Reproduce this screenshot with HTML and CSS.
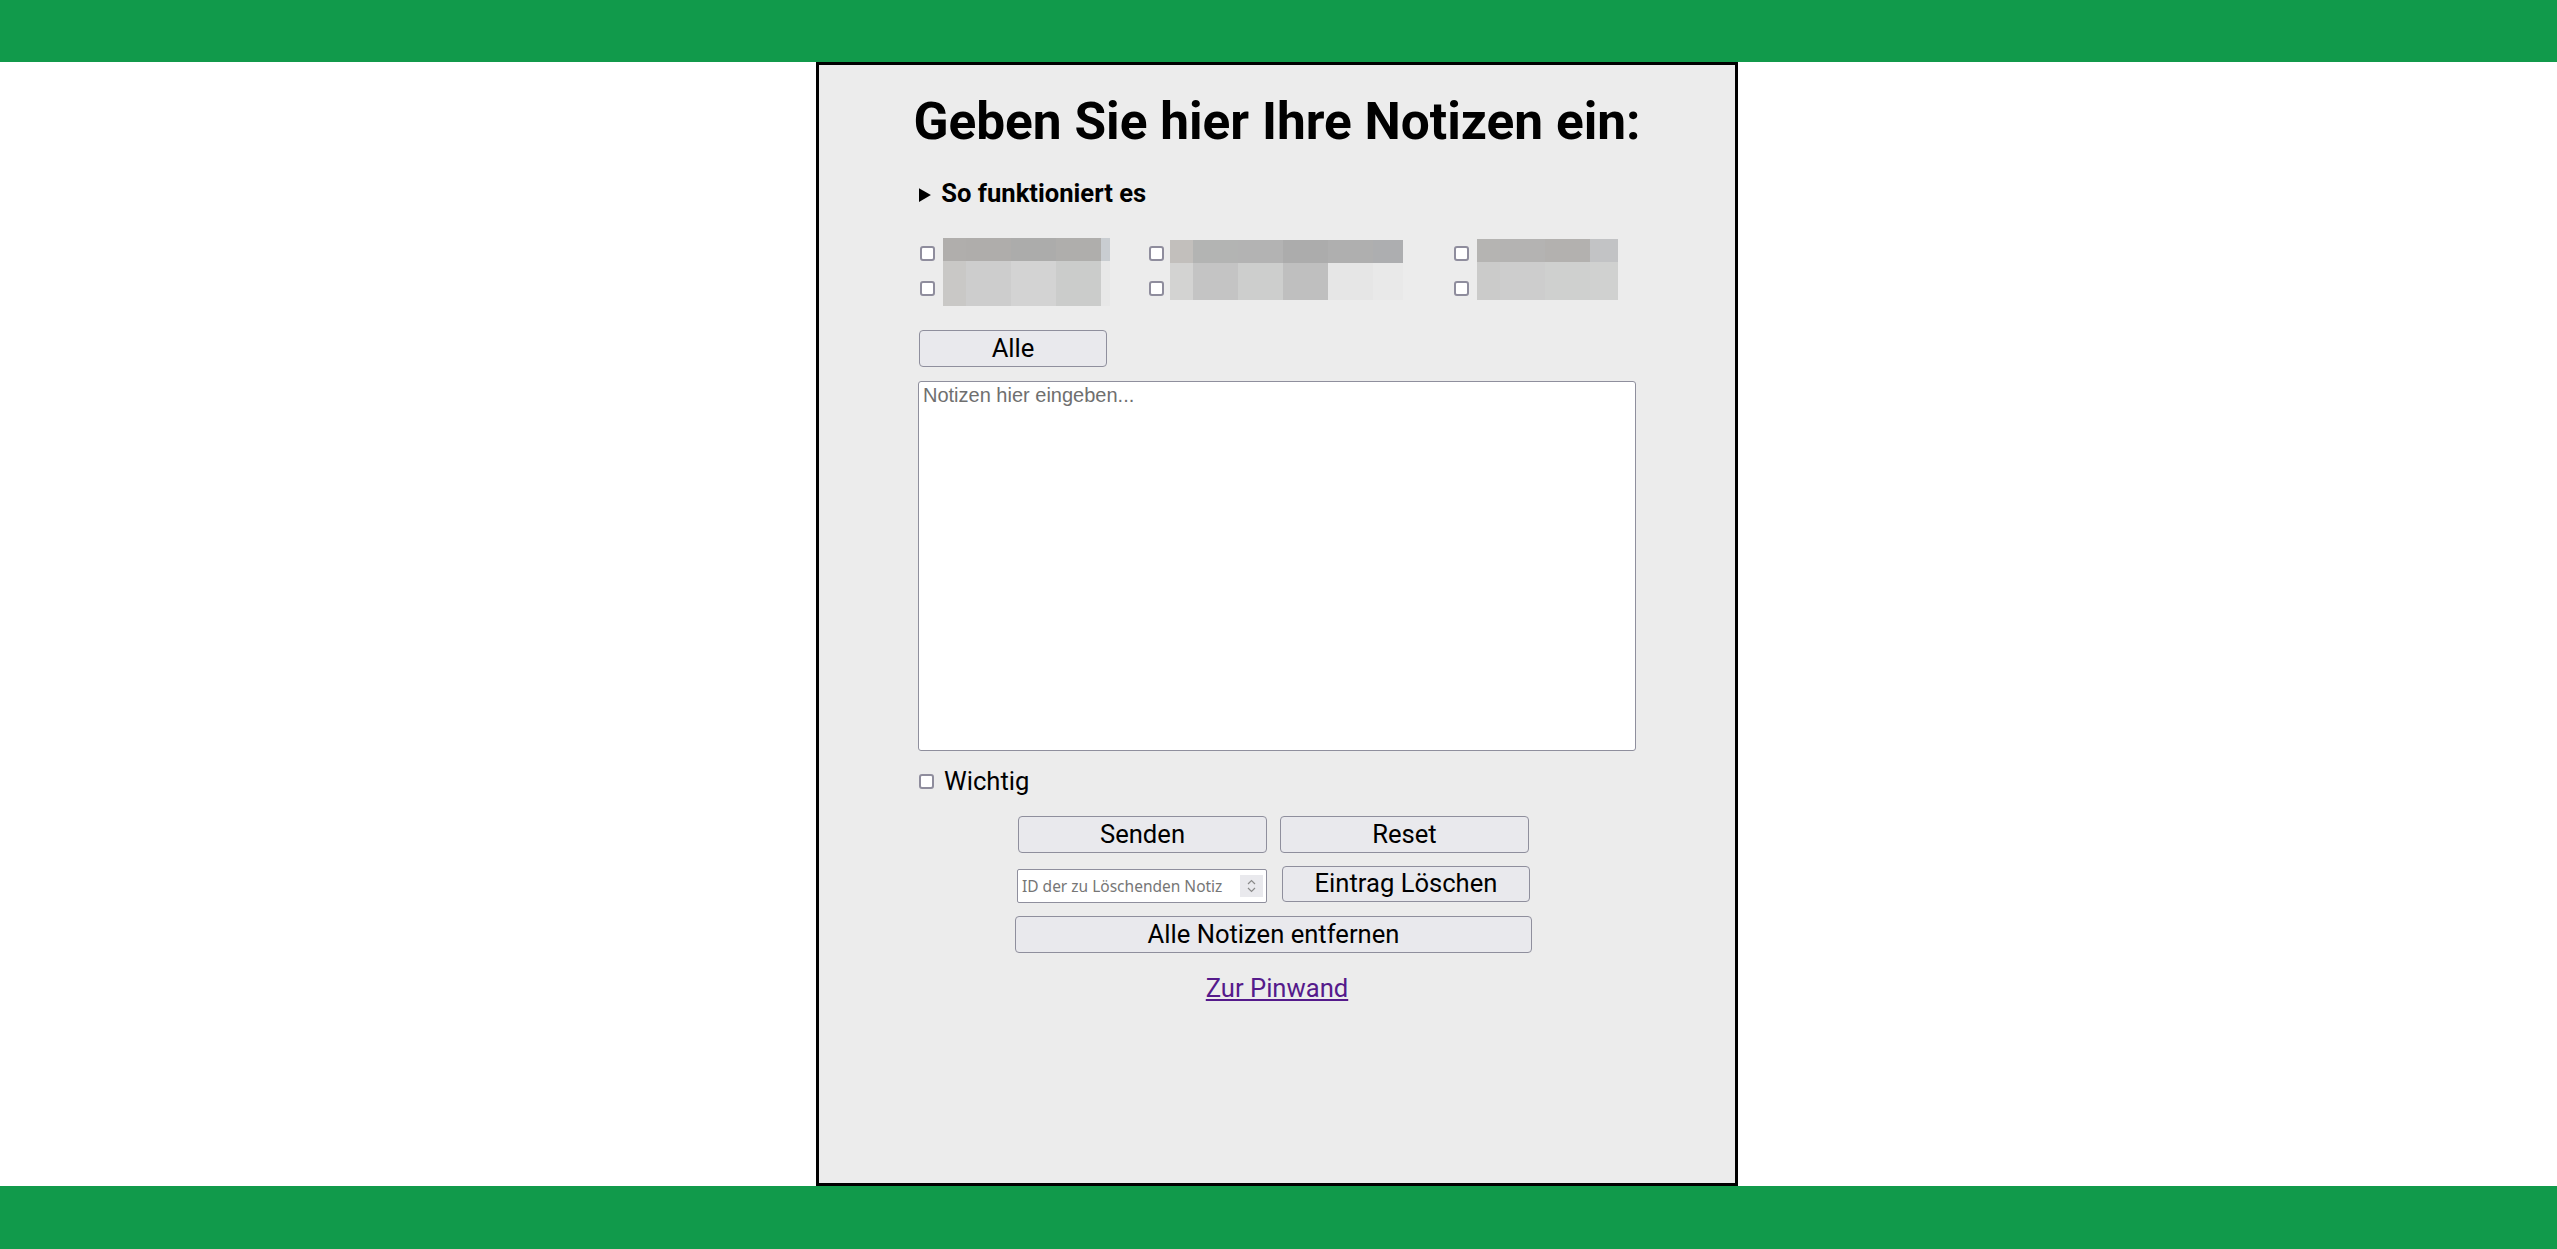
FILE: index.html
```html
<!DOCTYPE html>
<html lang="de">
<head>
<meta charset="utf-8">
<title>Notizen</title>
<link rel="stylesheet" href="styles.css">
</head>
<body>
<div class="page">
  <header class="topbar"></header>
  <main class="box">
    <div class="content">
      <h1 class="title">Geben Sie hier Ihre Notizen ein:</h1>
      <details class="howto">
        <summary>So funktioniert es</summary>
      </details>

      <div class="options">
        <div class="opt opt1">
          <div class="checks">
            <input type="checkbox" class="cb">
            <input type="checkbox" class="cb">
          </div>
          <div class="redact r1">
            <span></span><span></span><span></span><span></span><span></span>
            <span></span><span></span><span></span><span></span><span></span>
          </div>
        </div>
        <div class="opt opt2">
          <div class="checks">
            <input type="checkbox" class="cb">
            <input type="checkbox" class="cb">
          </div>
          <div class="redact r2">
            <span></span><span></span><span></span><span></span><span></span><span></span>
            <span></span><span></span><span></span><span></span><span></span><span></span>
          </div>
        </div>
        <div class="opt opt3">
          <div class="checks">
            <input type="checkbox" class="cb">
            <input type="checkbox" class="cb">
          </div>
          <div class="redact r3">
            <span></span><span></span><span></span><span></span>
            <span></span><span></span><span></span><span></span>
          </div>
        </div>
      </div>

      <button class="btn btn-all" type="button">Alle</button>

      <textarea class="notes" placeholder="Notizen hier eingeben..."></textarea>

      <label class="important">
        <input type="checkbox" class="cb">
        <span>Wichtig</span>
      </label>

      <div class="actions">
        <div class="row">
          <button class="btn btn-half" type="button">Senden</button>
          <button class="btn btn-half" type="button">Reset</button>
        </div>
        <div class="row row-del">
          <div class="numfield">
            <input class="numinput" type="text" placeholder="ID der zu Löschenden Notiz">
            <span class="spin">
              <svg width="11" height="16" viewBox="0 0 11 16" aria-hidden="true">
                <path d="M2 6 L5.5 2.5 L9 6" fill="none" stroke="#8a8a8a" stroke-width="1.2"/>
                <path d="M2 10 L5.5 13.5 L9 10" fill="none" stroke="#8a8a8a" stroke-width="1.2"/>
              </svg>
            </span>
          </div>
          <button class="btn btn-del" type="button">Eintrag Löschen</button>
        </div>
        <div class="row">
          <button class="btn btn-wide" type="button">Alle Notizen entfernen</button>
        </div>
      </div>

      <p class="linkline"><a class="pinlink" href="#pinwand">Zur Pinwand</a></p>
    </div>
  </main>
  <footer class="bottombar"></footer>
</div>
</body>
</html>
```
FILE: styles.css
```css
* { box-sizing: border-box; }

html, body {
  margin: 0;
  padding: 0;
  background: #ffffff;
  font-family: Roboto, "Liberation Sans", Arial, sans-serif;
  color: #000;
}

.page {
  display: flex;
  flex-direction: column;
  height: 100vh;
}

.topbar {
  height: 62px;
  background: #119a4b;
  flex: none;
}

.bottombar {
  height: 63px;
  background: #119a4b;
  flex: none;
}

.box {
  flex: 1;
  width: 922px;
  margin: 0 auto 0 calc(50% - 462.5px);
  border: 3px solid #000;
  background: #ececec;
}

.content {
  width: 718px;
  margin: 0 auto;
  padding-top: 27px;
}

.title {
  margin: 0 -40px;
  font-size: 51.4px;
  line-height: 60px;
  font-weight: 700;
  text-align: center;
  white-space: nowrap;
}

.howto {
  margin-top: 26px;
}

.howto summary {
  font-size: 25.6px;
  line-height: 30px;
  font-weight: 700;
  cursor: pointer;
  margin-left: 1px;
}

.howto summary::marker {
  font-size: 21px;
}

/* redacted options */
.options {
  display: flex;
  margin-top: 28px;
  height: 68px;
}

.opt {
  display: flex;
  align-items: flex-start;
}

.opt1 { width: 231px; padding-left: 2px; gap: 8px; }
.opt2 { width: 305px; gap: 6px; }
.opt3 { gap: 8px; }

.checks {
  display: flex;
  flex-direction: column;
  gap: 20px;
  padding-top: 8px;
}

.cb {
  appearance: none;
  -webkit-appearance: none;
  width: 15px;
  height: 15px;
  margin: 0;
  border: 2px solid #8f8d9d;
  border-radius: 3px;
  background: #fff;
  display: block;
}

.redact {
  display: grid;
}

.r1 {
  grid-template-columns: 23px 45px 45px 45px 9px;
  grid-template-rows: 23px 45px;
}
.r1 span:nth-child(1) { background: #b0aeac; }
.r1 span:nth-child(2) { background: #afadab; }
.r1 span:nth-child(3) { background: #acacab; }
.r1 span:nth-child(4) { background: #afaeac; }
.r1 span:nth-child(5) { background: #c9cdd1; }
.r1 span:nth-child(6) { background: #c9c8c6; }
.r1 span:nth-child(7) { background: #cdcdcd; }
.r1 span:nth-child(8) { background: #d3d3d3; }
.r1 span:nth-child(9) { background: #cbcccb; }
.r1 span:nth-child(10) { background: #e8e8e8; }

.r2 {
  margin-top: 2px;
  grid-template-columns: 23px 45px 45px 45px 45px 30px;
  grid-template-rows: 23px 37px;
}
.r2 span:nth-child(1) { background: #c2bfbc; }
.r2 span:nth-child(2) { background: #b3b4b3; }
.r2 span:nth-child(3) { background: #b3b3b3; }
.r2 span:nth-child(4) { background: #acacac; }
.r2 span:nth-child(5) { background: #afafaf; }
.r2 span:nth-child(6) { background: #adaeb0; }
.r2 span:nth-child(7) { background: #d3d3d2; }
.r2 span:nth-child(8) { background: #c4c4c4; }
.r2 span:nth-child(9) { background: #cdcecd; }
.r2 span:nth-child(10) { background: #bfbfbf; }
.r2 span:nth-child(11) { background: #e6e6e6; }
.r2 span:nth-child(12) { background: #e9e9e9; }

.r3 {
  margin-top: 1px;
  grid-template-columns: 23px 45px 45px 28px;
  grid-template-rows: 23px 38px;
}
.r3 span:nth-child(1) { background: #b5b4b2; }
.r3 span:nth-child(2) { background: #b4b3b2; }
.r3 span:nth-child(3) { background: #b3b1af; }
.r3 span:nth-child(4) { background: #c2c3c5; }
.r3 span:nth-child(5) { background: #cbcbca; }
.r3 span:nth-child(6) { background: #cdcdcd; }
.r3 span:nth-child(7) { background: #cfd0cf; }
.r3 span:nth-child(8) { background: #d0d1d0; }

/* buttons */
.btn {
  font-family: Roboto, "Liberation Sans", Arial, sans-serif;
  font-size: 25.6px;
  line-height: 1;
  color: #000;
  background: #e9e9ed;
  border: 1px solid #8f8f9d;
  border-radius: 4px;
  padding: 0;
  display: flex;
  align-items: center;
  justify-content: center;
}

.btn-all {
  margin-top: 24px;
  margin-left: 1px;
  width: 188px;
  height: 37px;
}

.notes {
  display: block;
  margin-top: 14px;
  width: 718px;
  height: 370px;
  border: 1px solid #8f8f9d;
  border-radius: 3px;
  padding: 2px 4px;
  background: #fff;
  resize: none;
  font-family: "Liberation Sans", Arial, sans-serif;
  font-size: 20px;
}

.notes::placeholder {
  color: #6f6f6f;
}

.important {
  display: flex;
  align-items: center;
  gap: 10px;
  margin-top: 15px;
  margin-left: 1px;
  height: 30px;
  font-size: 25.6px;
  line-height: 30px;
}

.actions {
  display: flex;
  flex-direction: column;
  align-items: center;
  margin-top: 20px;
  padding-right: 7px;
  margin-left: -60px;
  margin-right: -60px;
}

.row {
  display: flex;
  gap: 13px;
}

.row + .row { margin-top: 13px; }

.row-del {
  gap: 15px;
  align-items: flex-start;
}

.btn-half {
  width: 249px;
  height: 37px;
}

.btn-del {
  width: 248px;
  height: 36px;
}

.btn-wide {
  width: 517px;
  height: 37px;
}

.numfield {
  margin-top: 3px;
  width: 250px;
  height: 34px;
  background: #fff;
  border: 1px solid #8f8f9d;
  border-radius: 2px;
  display: flex;
  align-items: center;
  padding-right: 3px;
}

.numinput {
  flex: 1;
  min-width: 0;
  border: 0;
  background: transparent;
  padding: 0 0 0 4px;
  font-family: "Noto Sans", "Open Sans", sans-serif;
  font-size: 15.5px;
  color: #333;
  outline: none;
}

.numinput::placeholder {
  color: #767676;
}

.spin {
  width: 23px;
  height: 22px;
  background: #e9e9ed;
  display: flex;
  align-items: center;
  justify-content: center;
}

.linkline {
  margin: 20px 0 0;
  text-align: center;
  font-size: 25.6px;
  line-height: 30px;
}

.pinlink {
  color: #551a8b;
  text-decoration: underline;
}
```
